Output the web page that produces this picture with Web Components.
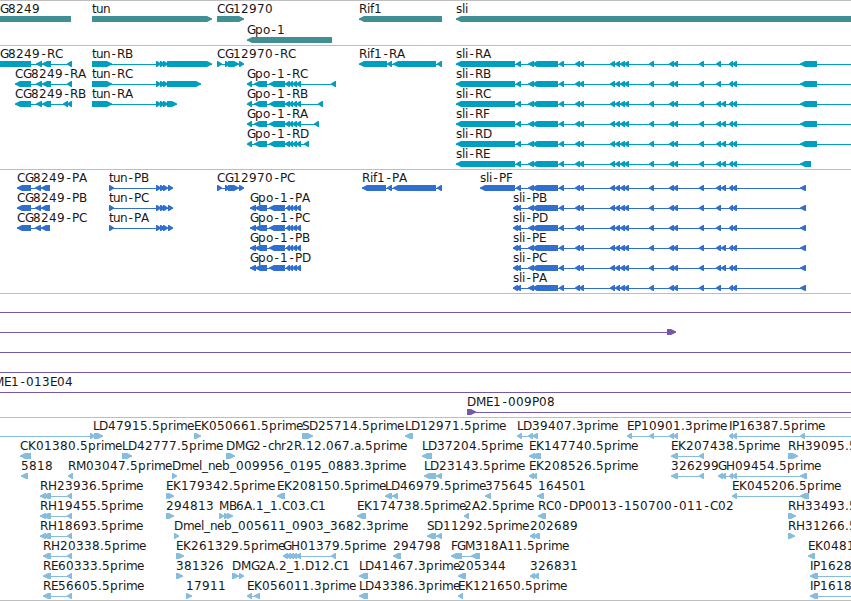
<!DOCTYPE html>
<html lang="en">
<head>
<meta charset="utf-8">
<title>Genome tracks</title>
<style>
body {
  margin: 0;
  background: #fff;
  font-family: "DejaVu Sans", sans-serif;
  overflow: hidden;
}
</style>
</head>
<body>
<genome-view></genome-view>

<script>
// advance widths, in pixels, of the label characters
const WIDTHS = {
  a: 7, b: 8, c: 6, e: 7, f: 4, h: 7, i: 3, l: 3, m: 11, n: 7, o: 7, p: 8, r: 5, s: 6, t: 4, u: 7,
  A: 8, B: 7, C: 8, D: 9, E: 7, F: 6, G: 8, H: 9, I: 3, K: 8, L: 6, M: 10, P: 7, R: 8, S: 7,
  '.': 4, '-': 7, '_': 6,
};

// One row: features separated by ";", each "label|label x|direction|blocks|line end".
// Blocks are "start-end" pairs, the direction is < or > (or = for no arrow head).
class FeatureRow extends HTMLElement {
  constructor() {
    super();
    this.attachShadow({mode: 'open'});
  }

  connectedCallback() {
    const features = this.getAttribute('features').split(';').map((f) => this.feature(f)).join('');
    this.shadowRoot.innerHTML = `
    <style>
      :host {
        display: block;
        height: var(--row-height, 20px);
      }
      svg {
        display: block;
        width: 100%;
        height: 100%;
        overflow: visible;
      }
      text {
        fill: #181818;
        font-size: 12px;
      }
      .shape {
        fill: var(--track-color);
      }
    </style>
    <svg>${features}</svg>
    `;
  }

  feature(source) {
    const [label, x, dir, blocks, line] = source.trim().split('|');
    const parts = blocks ? blocks.split(' ').map((b) => b.split(':').map(Number)) : [];
    let out = '';
    let from = parts.length ? parts[0][0] : 0;
    let to = parts.length ? parts[parts.length - 1][1] : 0;
    if (line) [from, to] = line.split(':').map(Number);
    out += `<rect class="shape" x="${from}" y="18" width="${to - from}" height="1"/>`;
    parts.forEach(([a, b]) => {
      out += `<path class="shape" d="${this.block(a, b, dir)}"/>`;
    });
    if (label) out += `<text x="${this.positions(label, Number(x))}" y="12">${label}</text>`;
    return out;
  }

  // the head is slightly blunt: a one pixel tip, full height near its base
  block(a, b, dir) {
    const head = Math.min(5, b - a - 1);
    if (dir === '<') return `M${a} 17.4L${a + head} 15H${b}V21H${a + head}L${a} 18.6z`;
    if (dir === '>') return `M${b} 17.4L${b - head} 15H${a}V21H${b - head}L${b} 18.6z`;
    return `M${a} 15H${b}V21H${a}z`;
  }

  positions(label, x) {
    return [...label].map((c) => {
      const at = c === '-' ? x + 1.4 : x;
      x += WIDTHS[c] || 8;
      return at;
    }).join(' ');
  }
}

class GenomeTrack extends HTMLElement {
  constructor() {
    super();
    this.attachShadow({mode: 'open'});
    this.shadowRoot.innerHTML = `
    <style>
      :host {
        display: flex;
        flex-direction: column;
        box-sizing: border-box;
        border-top: 1px solid #bebebe;
      }
    </style>
    <slot></slot>
    `;
  }
}

const RH = '40:46 43:51 67:72';
const RE = '43:51 67:72';
const SLI = '528:534 532:558 559:564 575:580 579:584 610:615 615:620 620:625 624:629 649:654 669:674 673:678 699:704 716:721';
const SLI_R = '456:515 516:521 ' + SLI;
const SLI_P = '513:518 516:521 ' + SLI;
const GPO_R = '247:252 254:267 269:285 285:290 289:293 292:297 296:301';
const GPO_P = '250:256 255:267 269:285 286:290 289:293 292:297 296:301';
const CG12970 = '217:222 225:230 228:239 239:244';
const TUN_R = '92:112 156:161 160:165 163:168';
const TUN_P = '109:114 156:161 160:165 163:168 168:173';
const CG_P = '17:31 35:41 41:50';

const TRACKS = [
  {
    name: 'genes',
    rows: [
      'G8249|0|=|-10:71;tun|92|>|92:212;CG12970|217|>|217:244;Rif1|359|<|359:442;sli|456|<|456:860',
      'Gpo-1|247|<|247:332',
    ],
  },
  {
    name: 'transcripts',
    rows: [
      `G8249-RC|0|<|-20:31 36:42 42:51 67:72;tun-RB|92|>|${TUN_R} 167:212;CG12970-RC|217|>|${CG12970};Rif1-RA|359|<|359:387 387:392 393:436 437:442;sli-RA|456|<|${SLI_R} 729:733 732:737 800:817|456:851`,
      `CG8249-RA|15|<|15:31 36:42 42:51 67:72;tun-RC|92|>|${TUN_R} 167:201;Gpo-1-RC|247|<|${GPO_R} 331:336;sli-RB|456|<|${SLI_R} 729:733 732:737 800:817|456:851`,
      `CG8249-RB|15|<|15:31 36:42 42:51 63:68 67:72;tun-RA|92|>|${TUN_R} 167:177;Gpo-1-RB|247|<|${GPO_R} 318:323;sli-RC|456|<|${SLI_R} 721:726 729:733 732:737 800:817|456:851`,
      `Gpo-1-RA|247|<|${GPO_R} 314:319;sli-RF|456|<|${SLI_R} 721:726 729:733 732:737 800:817|456:851`,
      `Gpo-1-RD|247|<|${GPO_R} 304:309;sli-RD|456|<|${SLI_R} 721:726 729:733 732:737 800:817|456:851`,
      `sli-RE|456|<|${SLI_R} 721:726 729:733 732:737 800:811`,
    ],
  },
  {
    name: 'proteins',
    rows: [
      `CG8249-PA|17|<|${CG_P};tun-PB|109|>|${TUN_P};CG12970-PC|217|>|${CG12970};Rif1-PA|362|<|362:386 387:392 393:436 437:442;sli-PF|480|<|480:515 516:521 ${SLI} 721:726 729:733 732:737 800:806`,
      `CG8249-PB|17|<|${CG_P};tun-PC|109|>|${TUN_P};Gpo-1-PA|250|<|${GPO_P};sli-PB|513|<|${SLI_P} 729:733 732:737 800:806`,
      `CG8249-PC|17|<|${CG_P};tun-PA|109|>|${TUN_P};Gpo-1-PC|250|<|${GPO_P};sli-PD|513|<|${SLI_P} 729:733 732:737 800:806`,
      `Gpo-1-PB|250|<|${GPO_P};sli-PE|513|<|${SLI_P} 721:726 729:733 732:737 800:806`,
      `Gpo-1-PD|250|<|${GPO_P};sli-PC|513|<|${SLI_P} 721:726 729:733 732:737 800:806`,
      `sli-PA|513|<|${SLI_P} 729:733 732:737 800:806`,
    ],
  },
  {
    name: 'clones',
    rows: [
      '||>||0:851',
      '||>|667:676|0:676',
      '||>||0:851',
      '||>||0:851',
      'ME1-013E04|-6|>||0:851',
      'DME1-009P08|467|>|467:476|467:851',
    ],
  },
  {
    name: 'reads',
    rows: [
      'LD47915.5prime|93|>|90:95 94:103|0:103;EK050661.5prime|194|>|194:201;SD25714.5prime|302|>|302:313;LD12971.5prime|405|<|405:413;LD39407.3prime|517|<|517:522 528:533 532:538;EP10901.3prime|627|<|627:632 649:654 669:674 673:678;IP16387.5prime|729|<|729:733 732:737 800:805|729:851',
      'CK01380.5prime|20|<|20:31;LD42777.5prime|122|>|122:132;DMG2-chr2R.12.067.a.5prime|226|>|226:235;LD37204.5prime|422|<|422:432;EK147740.5prime|529|<|529:535 532:541;EK207438.5prime|671|<|671:678 699:704;RH39095.5|788|>|788:798',
      '5818|21|<|21:28;RM03047.5prime|68|<|68:73;Dmel_neb_009956_0195_0883.3prime|172|>|172:177;LD23143.5prime|424|<|424:436 436:442;EK208526.5prime|529|<|529:534 532:537;326299|671|<|671:678 699:704;GH09454.5prime|718|<|718:723 721:726 729:733 732:737 800:807',
      `RH23936.5prime|40|<|${RH};EK179342.5prime|166|>|166:171 168:174;EK208150.5prime|277|<|277:285;LD46979.5prime|385|<|385:392 392:398;375645|485|<|485:491;164501|538|<|537:544;EK045206.5prime|732|<|732:737 800:809`,
      `RH19455.5prime|40|<|${RH};294813|166|>|166:174;MB6A.1_1.C03.C1|219|>|219:224 224:229 227:233;EK174738.5prime|357|<|357:366;2A2.5prime|464|<|464:469;RC0-DP0013-150700-011-C02|538|<|538:546;RH33493.5|788|>|788:796`,
      `RH18693.5prime|40|<|${RH};Dmel_neb_005611_0903_3682.3prime|174|>|174:179;SD11292.5prime|427|<|427:436 436:442;202689|530|<|530:535 533:540;RH31266.5|788|>|788:795`,
      `RH20338.5prime|43|<|${RE};EK261329.5prime|176|>|176:184;GH01379.5prime|283|<|283:288 286:291 289:294 292:297 295:301 331:336;294798|393|<|393:401;FGM318A11.5prime|451|<|451:462 471:480;EK0481|808|<|808:815`,
      `RE60333.5prime|43|<|${RE};381326|176|>|176:183;DMG2A.2_1.D12.C1|232|>|232:239 239:244;LD41467.3prime|359|<|359:368;205344|458|<|458:466;326831|530|<|530:535 533:539;IP1628|810|<|810:818|810:851`,
      `RE56605.5prime|43|<|${RE};17911|186|>|186:192;EK056011.3prime|247|<|247:252 254:260;LD43386.3prime|359|<|359:368;EK121650.5prime|458|<|458:463;IP1618|810|<|810:818|810:851`,
    ],
  },
];

class GenomeView extends HTMLElement {
  constructor() {
    super();
    this.attachShadow({mode: 'open'});

    const tracks = TRACKS.map((track) => `
      <genome-track class="${track.name}">
        ${track.rows.map((row) => `<feature-row features="${row.replace(/</g, '&lt;')}"></feature-row>`).join('')}
      </genome-track>
    `).join('');

    this.shadowRoot.innerHTML = `
    <style>
      :host {
        display: grid;
        box-sizing: border-box;
        width: 851px;
        height: 601px;
        grid-template-rows: 45px 124px 124px 124px 183px;
        border-bottom: 1px solid #bebebe;
        overflow: hidden;
      }
      .genes {
        --track-color: #408f95;
        --row-height: 21px;
      }
      .transcripts {
        --track-color: #009fbf;
      }
      .proteins {
        --track-color: #306fcf;
      }
      .clones {
        --track-color: #7558a8;
      }
      .reads {
        --track-color: #86bcde;
      }
    </style>
    ${tracks}
    `;
  }
}

customElements.define('feature-row', FeatureRow);
customElements.define('genome-track', GenomeTrack);
customElements.define('genome-view', GenomeView);
</script>
</body>
</html>
